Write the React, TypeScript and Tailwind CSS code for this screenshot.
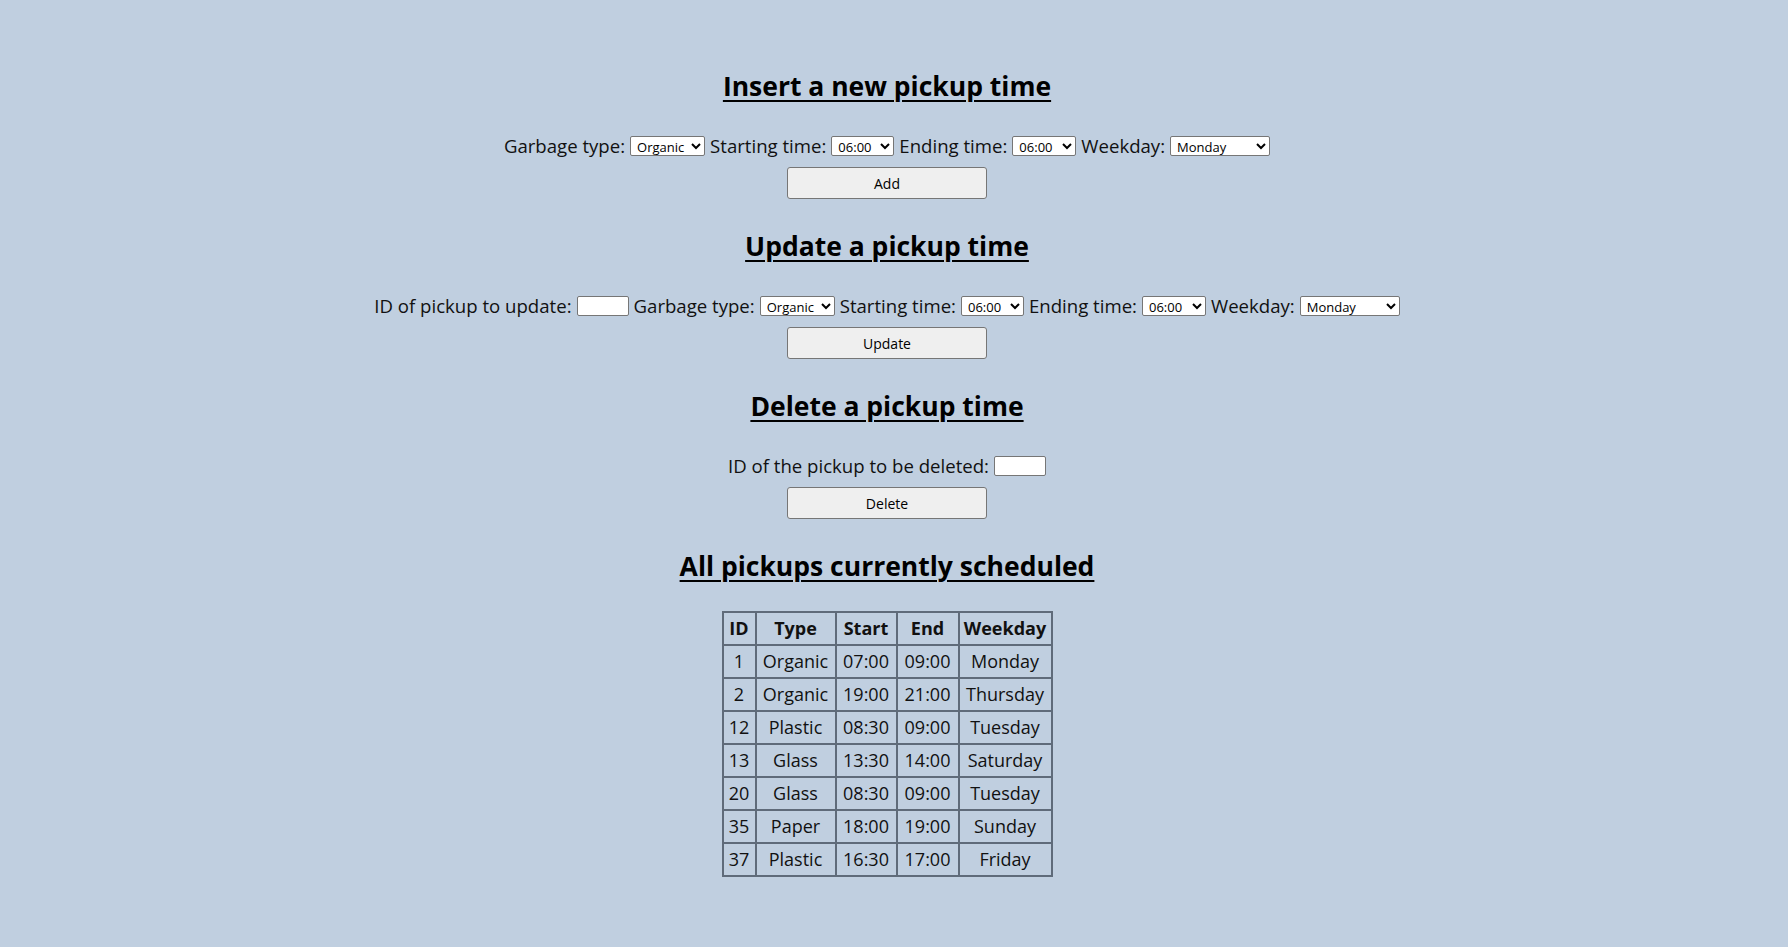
import React from "react";

const font = { fontFamily: '"Open Sans", "Noto Sans", sans-serif' };

const types = ["Organic", "Plastic", "Glass", "Paper"];
const times = ["06:00", "06:30", "07:00", "07:30", "08:00"];
const days = ["Monday", "Tuesday", "Wednesday", "Thursday", "Friday", "Saturday", "Sunday"];

function Sel({ options, w }: { options: string[]; w: string }) {
  return (
    <select
      className={`${w} h-[20px] text-[13px] leading-[16px] bg-white border border-[#767676] rounded-[2px] pl-[2px] text-black`}
      style={font}
      defaultValue={options[0]}
    >
      {options.map((o) => (
        <option key={o}>{o}</option>
      ))}
    </select>
  );
}

function TextIn() {
  return <input type="text" className="w-[52px] h-[20px] bg-white border border-[#767676] rounded-[2px] text-[13px]" />;
}

function Btn({ label }: { label: string }) {
  return (
    <button className="mt-[7px] w-[200px] h-[32px] bg-[#efefef] border border-[#767676] rounded-[3px] text-[14px] text-black">
      {label}
    </button>
  );
}

function H({ children, mt }: { children: React.ReactNode; mt?: string }) {
  return (
    <h2 className={`${mt ?? ""} h-[32px] leading-[32px] text-[26.5px] font-bold underline underline-offset-[4px] decoration-[2px] text-black`}>
      {children}
    </h2>
  );
}

const rows = [
  ["1", "Organic", "07:00", "09:00", "Monday"],
  ["2", "Organic", "19:00", "21:00", "Thursday"],
  ["12", "Plastic", "08:30", "09:00", "Tuesday"],
  ["13", "Glass", "13:30", "14:00", "Saturday"],
  ["20", "Glass", "08:30", "09:00", "Tuesday"],
  ["35", "Paper", "18:00", "19:00", "Sunday"],
  ["37", "Plastic", "16:30", "17:00", "Friday"],
];

const widths = ["w-[33px]", "w-[80px]", "w-[61px]", "w-[62px]", "w-[93px]"];

export default function App() {
  return (
    <div className="min-h-[947px] w-full bg-[#c0cfe0] text-[#111]" style={font}>
      <div className="w-[1774px] flex flex-col items-center pt-[70px] pb-[70px]">
        <H>Insert a new pickup time</H>
        <div className="mt-[30px] h-[28px] flex items-center gap-[5px] text-[18.6px]">
          <span>Garbage type:</span>
          <Sel options={types} w="w-[75px]" />
          <span>Starting time:</span>
          <Sel options={times} w="w-[63px]" />
          <span>Ending time:</span>
          <Sel options={times} w="w-[64px]" />
          <span>Weekday:</span>
          <Sel options={days} w="w-[100px]" />
        </div>
        <Btn label="Add" />

        <H mt="mt-[31px]">Update a pickup time</H>
        <div className="mt-[30px] h-[28px] flex items-center gap-[5px] text-[18.6px]">
          <span>ID of pickup to update:</span>
          <TextIn />
          <span>Garbage type:</span>
          <Sel options={types} w="w-[75px]" />
          <span>Starting time:</span>
          <Sel options={times} w="w-[63px]" />
          <span>Ending time:</span>
          <Sel options={times} w="w-[64px]" />
          <span>Weekday:</span>
          <Sel options={days} w="w-[100px]" />
        </div>
        <Btn label="Update" />

        <H mt="mt-[31px]">Delete a pickup time</H>
        <div className="mt-[30px] h-[28px] flex items-center gap-[5px] text-[18.6px]">
          <span>ID of the pickup to be deleted:</span>
          <TextIn />
        </div>
        <Btn label="Delete" />

        <H mt="mt-[31px]">All pickups currently scheduled</H>
        <table className="mt-[29px] border-collapse text-[18px]">
          <thead>
            <tr className="h-[33px]">
              {["ID", "Type", "Start", "End", "Weekday"].map((h, i) => (
                <th key={h} className={`${widths[i]} border-2 border-[#5f6b7a] font-bold text-center p-0`}>
                  {h}
                </th>
              ))}
            </tr>
          </thead>
          <tbody>
            {rows.map((r) => (
              <tr key={r[0]} className="h-[33px]">
                {r.map((c, i) => (
                  <td key={i} className={`${widths[i]} border-2 border-[#5f6b7a] text-center p-0`}>
                    {c}
                  </td>
                ))}
              </tr>
            ))}
          </tbody>
        </table>
      </div>
    </div>
  );
}
